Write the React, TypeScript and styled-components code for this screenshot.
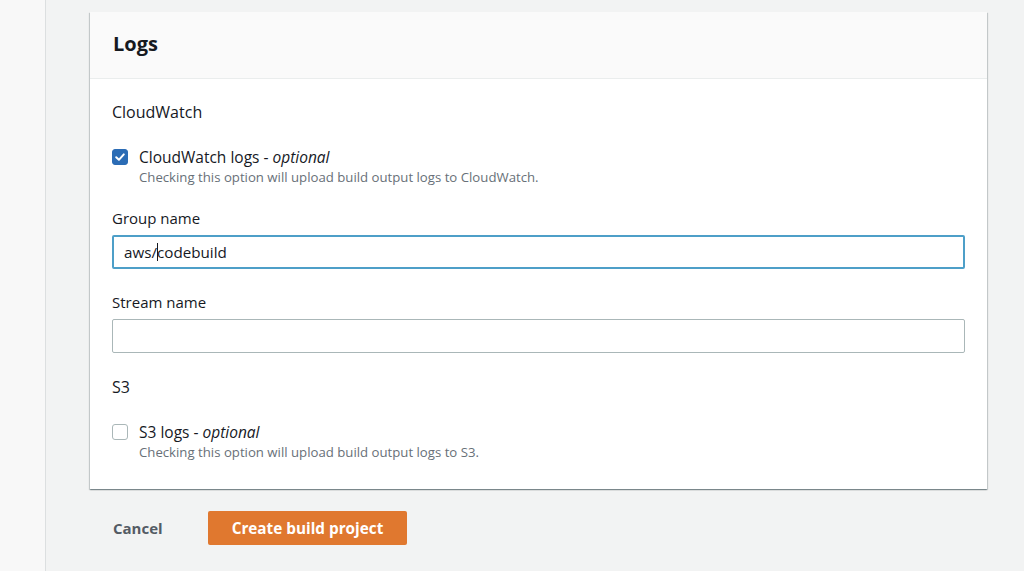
import * as React from 'react';
import styled, { createGlobalStyle } from 'styled-components';

const GlobalStyle = createGlobalStyle`
    html, body {
        margin: 0;
        padding: 0;
        background: #f2f3f3;
    }
    body {
        font-family: 'Open Sans', 'Noto Sans', 'Liberation Sans', sans-serif;
        color: #16191f;
        -webkit-font-smoothing: antialiased;
    }
`;

const CheckIcon: React.FC = () => (
    <svg width="12" height="12" viewBox="0 0 12 12" aria-hidden>
        <path d="M2.2 6.2 L4.9 8.8 L9.8 3.4" fill="none" stroke="#fff" strokeWidth="2" strokeLinecap="round" strokeLinejoin="round" />
    </svg>
);

type CheckOptionProps = {
    checked: boolean;
    label: string;
    description: string;
};

const CheckOption: React.FC<CheckOptionProps> = ({ checked, label, description }) => (
    <OptionRow>
        <CheckBox checked={checked}>{checked && <CheckIcon />}</CheckBox>
        <OptionText>
            <OptionLabel>
                {label} - <em>optional</em>
            </OptionLabel>
            <OptionDescription>{description}</OptionDescription>
        </OptionText>
    </OptionRow>
);

export default function App() {
    return (
        <>
            <GlobalStyle />
            <Page>
                <SideStrip />
                <Main>
                    <Card>
                        <CardHeader>
                            <CardTitle>Logs</CardTitle>
                        </CardHeader>
                        <CardBody>
                            <SectionTitle>CloudWatch</SectionTitle>
                            <CheckOption
                                checked
                                label="CloudWatch logs"
                                description="Checking this option will upload build output logs to CloudWatch."
                            />
                            <Field>
                                <FieldLabel>Group name</FieldLabel>
                                <TextBox focused>
                                    aws/
                                    <Caret />
                                    codebuild
                                </TextBox>
                            </Field>
                            <Field>
                                <FieldLabel>Stream name</FieldLabel>
                                <TextBox />
                            </Field>
                            <SectionTitle>S3</SectionTitle>
                            <CheckOption
                                checked={false}
                                label="S3 logs"
                                description="Checking this option will upload build output logs to S3."
                            />
                        </CardBody>
                    </Card>
                    <Actions>
                        <LinkButton>Cancel</LinkButton>
                        <PrimaryButton>Create build project</PrimaryButton>
                    </Actions>
                </Main>
            </Page>
        </>
    );
}

const Page = styled.div`
    display: flex;
    min-height: 571px;
`;

const SideStrip = styled.div`
    width: 45px;
    flex-shrink: 0;
    background: #f8f8f8;
    border-right: 1px solid #dcdfe0;
`;

const Main = styled.div`
    flex: 1;
    padding: 12px 37px 0 44px;
`;

const Card = styled.div`
    background: #fff;
    box-shadow: 0 1px 1px 0 rgba(0, 28, 36, 0.3), 1px 1px 1px 0 rgba(0, 28, 36, 0.15),
        -1px 1px 1px 0 rgba(0, 28, 36, 0.15);
`;

const CardHeader = styled.div`
    background: #fafafa;
    border-bottom: 1px solid #eaeded;
    height: 66px;
    padding: 0 23px;
    display: flex;
    align-items: center;
`;

const CardTitle = styled.h2`
    margin: 0 0 2px;
    font-size: 20px;
    font-weight: 700;
    line-height: 24px;
`;

const SectionTitle = styled.h3`
    margin: 0 0 22px;
    font-size: 16px;
    font-weight: 400;
    line-height: 24px;
`;

const CardBody = styled.div`
    padding: 21px 22px 28px;
    display: flex;
    flex-direction: column;

    ${SectionTitle}:not(:first-child) {
        margin-top: 22px;
    }
`;

const OptionRow = styled.div`
    display: flex;
    gap: 11px;
    align-items: flex-start;
`;

const CheckBox = styled.span<{ checked: boolean }>`
    width: 16px;
    height: 16px;
    margin-top: 3px;
    box-sizing: border-box;
    border-radius: 3px;
    flex-shrink: 0;
    display: flex;
    align-items: center;
    justify-content: center;
    background: ${p => (p.checked ? '#2b6cb5' : '#fff')};
    border: 1px solid ${p => (p.checked ? '#2b6cb5' : '#aab7b8')};
`;

const OptionText = styled.div`
    display: flex;
    flex-direction: column;
`;

const OptionLabel = styled.span`
    font-size: 15.5px;
    line-height: 22px;
    em {
        font-style: italic;
    }
`;

const OptionDescription = styled.span`
    font-size: 13.2px;
    line-height: 18px;
    color: #687078;
`;

const Field = styled.div`
    display: flex;
    flex-direction: column;
    margin-top: 21px;
    & + & {
        margin-top: 22px;
    }
`;

const FieldLabel = styled.label`
    font-size: 15px;
    line-height: 22px;
    margin-bottom: 6px;
`;

const TextBox = styled.div<{ focused?: boolean }>`
    box-sizing: border-box;
    height: 34px;
    display: flex;
    align-items: center;
    font-size: 15.2px;
    color: #16191f;
    border-radius: 2px;
    border: ${p => (p.focused ? '2px solid #4d9fc8' : '1px solid #aab7b8')};
    padding: 0 ${p => (p.focused ? '10px' : '11px')};
`;

const Caret = styled.span`
    display: inline-block;
    width: 1px;
    height: 18px;
    background: #16191f;
    margin-right: -1px;
`;

const Actions = styled.div`
    display: flex;
    align-items: center;
    gap: 45px;
    padding: 22px 0 0 23px;
`;

const LinkButton = styled.button`
    border: none;
    background: none;
    padding: 0;
    font-family: inherit;
    font-size: 15px;
    font-weight: 700;
    color: #545b64;
    cursor: pointer;
`;

const PrimaryButton = styled.button`
    border: none;
    border-radius: 2px;
    background: #e0782f;
    color: #fff;
    font-family: inherit;
    font-size: 15.3px;
    font-weight: 700;
    height: 34px;
    padding: 0 24px;
    cursor: pointer;
`;
